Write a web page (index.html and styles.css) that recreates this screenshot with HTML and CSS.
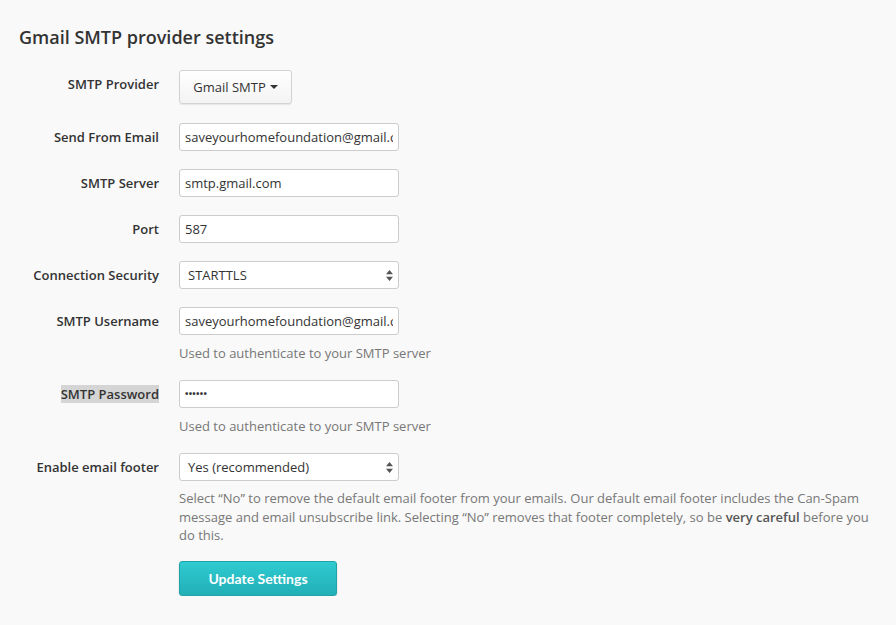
FILE: index.html
```html
<!DOCTYPE html>
<html>
<head>
<meta charset="utf-8">
<link rel="stylesheet" href="styles.css">
</head>
<body>
<div class="page">
  <h1 class="title">Gmail SMTP provider settings</h1>
  <form class="form">
    <div class="row row-provider">
      <label class="label">SMTP Provider</label>
      <div class="control">
        <button type="button" class="dropdown">Gmail SMTP <span class="caret"></span></button>
      </div>
    </div>
    <div class="row">
      <label class="label">Send From Email</label>
      <div class="control"><input class="input" type="text" value="saveyourhomefoundation@gmail.com"></div>
    </div>
    <div class="row">
      <label class="label">SMTP Server</label>
      <div class="control"><input class="input" type="text" value="smtp.gmail.com"></div>
    </div>
    <div class="row">
      <label class="label">Port</label>
      <div class="control"><input class="input" type="text" value="587"></div>
    </div>
    <div class="row">
      <label class="label">Connection Security</label>
      <div class="control">
        <div class="select-wrap">
          <div class="select">STARTTLS</div>
          <svg class="arrows" width="7" height="11" viewBox="0 0 7 11"><path d="M3.5 0 L7 4.2 L0 4.2 Z M0 6.8 L7 6.8 L3.5 11 Z" fill="#555"/></svg>
        </div>
      </div>
    </div>
    <div class="row">
      <label class="label">SMTP Username</label>
      <div class="control">
        <input class="input" type="text" value="saveyourhomefoundation@gmail.com">
        <p class="help help-tight">Used to authenticate to your SMTP server</p>
      </div>
    </div>
    <div class="row">
      <label class="label"><span class="selected">SMTP Password</span></label>
      <div class="control">
        <input class="input pw" type="text" value="••••••">
        <p class="help">Used to authenticate to your SMTP server</p>
      </div>
    </div>
    <div class="row">
      <label class="label">Enable email footer</label>
      <div class="control">
        <div class="select-wrap">
          <div class="select">Yes (recommended)</div>
          <svg class="arrows" width="7" height="11" viewBox="0 0 7 11"><path d="M3.5 0 L7 4.2 L0 4.2 Z M0 6.8 L7 6.8 L3.5 11 Z" fill="#555"/></svg>
        </div>
        <p class="help help-wide">Select “No” to remove the default email footer from your emails. Our default email footer includes the Can-Spam message and email unsubscribe link. Selecting “No” removes that footer completely, so be <b class="strong">very careful</b> before you do this.</p>
      </div>
    </div>
    <div class="row row-submit">
      <div class="label"></div>
      <div class="control">
        <button type="button" class="submit">Update Settings</button>
      </div>
    </div>
  </form>
</div>
</body>
</html>
```

FILE: styles.css
```css
* { box-sizing: border-box; }
html, body {
  margin: 0;
  padding: 0;
  background: #f9f9f9;
}
body {
  font-family: "Open Sans", "Liberation Sans", sans-serif;
  color: #333;
  font-size: 13px;
}
.page {
  padding: 24px 0 0 19px;
  width: 880px;
}
.title {
  margin: 0 0 20px 0;
  font-size: 18px;
  font-weight: 600;
  line-height: 26px;
  color: #333;
}
.form {
  display: flex;
  flex-direction: column;
  gap: 18px;
}
.row {
  display: grid;
  grid-template-columns: 140px 1fr;
  column-gap: 20px;
  align-items: start;
}
.row-provider {
  margin-bottom: 1px;
}
.row-submit {
  margin-top: -2px;
}
.label {
  text-align: right;
  font-weight: 600;
  font-size: 13px;
  line-height: 28px;
  color: #333;
}
.selected {
  background: #d5d5d5;
}
.control {
  display: flex;
  flex-direction: column;
  align-items: flex-start;
}
.input, .select {
  width: 220px;
  height: 28px;
  border: 1px solid #ccc;
  border-radius: 3px;
  background: #fff;
  font-family: "Open Sans", "Liberation Sans", sans-serif;
  font-size: 13px;
  color: #333;
  padding: 0 5px;
  line-height: 26px;
  margin: 0;
  outline: none;
}
.pw {
  font-size: 9px;
  letter-spacing: 0.3px;
  color: #333;
  font-weight: 700;
}
.select-wrap {
  position: relative;
  width: 220px;
}
.select {
  padding-left: 8px;
}
.arrows {
  position: absolute;
  right: 6px;
  top: 9px;
}
.dropdown {
  height: 34px;
  width: 113px;
  border: 1px solid #d3d3d3;
  border-radius: 3px;
  background: linear-gradient(#ffffff, #f3f3f3);
  box-shadow: 0 1px 1px rgba(0,0,0,0.08);
  font-family: "Open Sans", "Liberation Sans", sans-serif;
  font-size: 13px;
  color: #333;
  padding: 0;
  display: flex;
  align-items: center;
  justify-content: center;
  gap: 4px;
}
.caret {
  display: inline-block;
  width: 0;
  height: 0;
  border-left: 4px solid transparent;
  border-right: 4px solid transparent;
  border-top: 4px solid #333;
}
.help {
  margin: 9px 0 0 0;
  color: #777;
  font-size: 13px;
  line-height: 18.5px;
}
.help-tight {
  margin-bottom: -1px;
}
.help-wide {
  width: 700px;
  margin: 8px 0 0 0;
}
.strong {
  font-weight: 600;
  color: #555;
}
.submit {
  width: 158px;
  height: 35px;
  border: 1px solid #1fa3a9;
  border-radius: 3px;
  background: linear-gradient(#2ecbd1, #22afb6);
  box-shadow: 0 1px 2px rgba(0,0,0,0.15);
  color: #fff;
  font-family: Lato, "Open Sans", sans-serif;
  font-weight: 700;
  font-size: 14px;
}
```
